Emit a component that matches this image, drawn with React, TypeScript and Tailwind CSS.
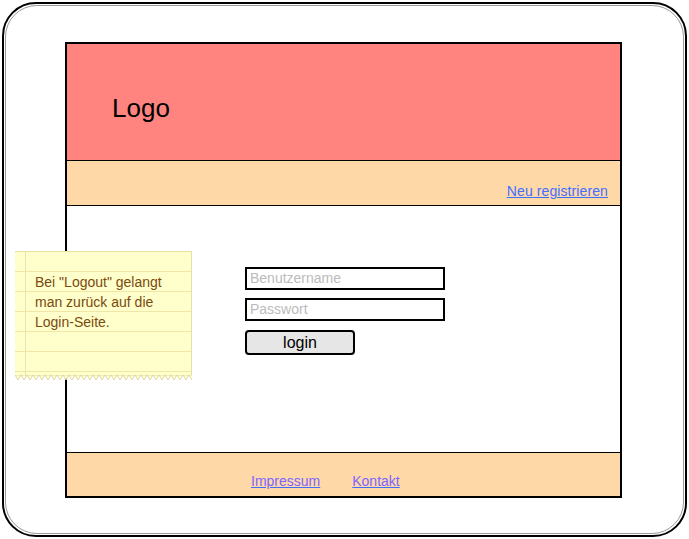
import { Fragment } from "react";

const noteLines = [271, 291, 311, 331, 351, 371];

function StickyNote() {
  return (
    <div className="absolute left-[15px] top-[251px] w-[177px] h-[130px]">
      <div className="relative w-full h-[124px] bg-[#ffffcc] border-t border-r border-[#e8e0a0]">
        {noteLines.map((y) => (
          <div key={y} className="absolute left-0 right-0 h-px bg-[#efe7a8]" style={{ top: y - 252 }} />
        ))}
        <div className="absolute top-0 bottom-0 left-[10px] w-px bg-[#efe0b0]" />
        <p className="relative pl-[20px] pt-[20px] text-[14px] leading-[20px] text-[#7a4a10]">
          Bei "Logout" gelangt
          <br />
          man zurück auf die
          <br />
          Login-Seite.
        </p>
      </div>
      <svg width="177" height="6" viewBox="0 0 177 6" className="block">
        <path
          d={
            "M0 0 " +
            Array.from({ length: 30 })
              .map((_, i) => `L${i * 6 + 3} 5 L${i * 6 + 6} 0`)
              .join(" ") +
            " Z"
          }
          fill="#ffffcc"
          stroke="#d8d0a0"
          strokeWidth="0.8"
        />
      </svg>
    </div>
  );
}

export default function App() {
  return (
    <div className="relative w-[689px] h-[539px] bg-white p-[2px] font-['Liberation_Sans',Arial,sans-serif]">
      <div className="h-full rounded-[34px] border-2 border-black p-px">
        <div className="h-full rounded-[32px] border border-[#999] pl-[59px] pt-[36px]">
          <div className="w-[557px] h-[456px] border-2 border-black flex flex-col">
            <div className="h-[117px] bg-[#ff8480] border-b border-black flex items-center pl-[45px] pt-[12px]">
              <span className="text-[26px] text-black">Logo</span>
            </div>
            <div className="h-[45px] bg-[#ffd8a8] border-b border-black flex items-end justify-end pr-[12px] pb-[3px]">
              <a href="#" className="text-[14px] tracking-[0.1px] text-[#3f6fff] underline">Neu registrieren</a>
            </div>
            <div className="flex-1 bg-white border-b border-black pl-[178px] pt-[61px]">
              <div className="flex flex-col gap-[8px]">
                <div className="w-[200px] h-[23px] border-2 border-black px-[3px] text-[14px] leading-[19px] text-[#bbbbbb]">Benutzername</div>
                <div className="w-[200px] h-[23px] border-2 border-black px-[3px] text-[14px] leading-[19px] text-[#bbbbbb]">Passwort</div>
                <div className="mt-[1px] w-[110px] h-[25px] rounded-[4px] border-2 border-black bg-[#e6e6e6] flex items-center justify-center text-[16px] text-black">login</div>
              </div>
            </div>
            <div className="h-[43px] bg-[#ffd8a8] flex items-end pl-[184px] pb-[4px] gap-[32px]">
              {["Impressum", "Kontakt"].map((t) => (
                <Fragment key={t}>
                  <a href="#" className="text-[14px] text-[#7a66ff] underline decoration-[#3f6fff]">{t}</a>
                </Fragment>
              ))}
            </div>
          </div>
        </div>
      </div>
      <StickyNote />
    </div>
  );
}
